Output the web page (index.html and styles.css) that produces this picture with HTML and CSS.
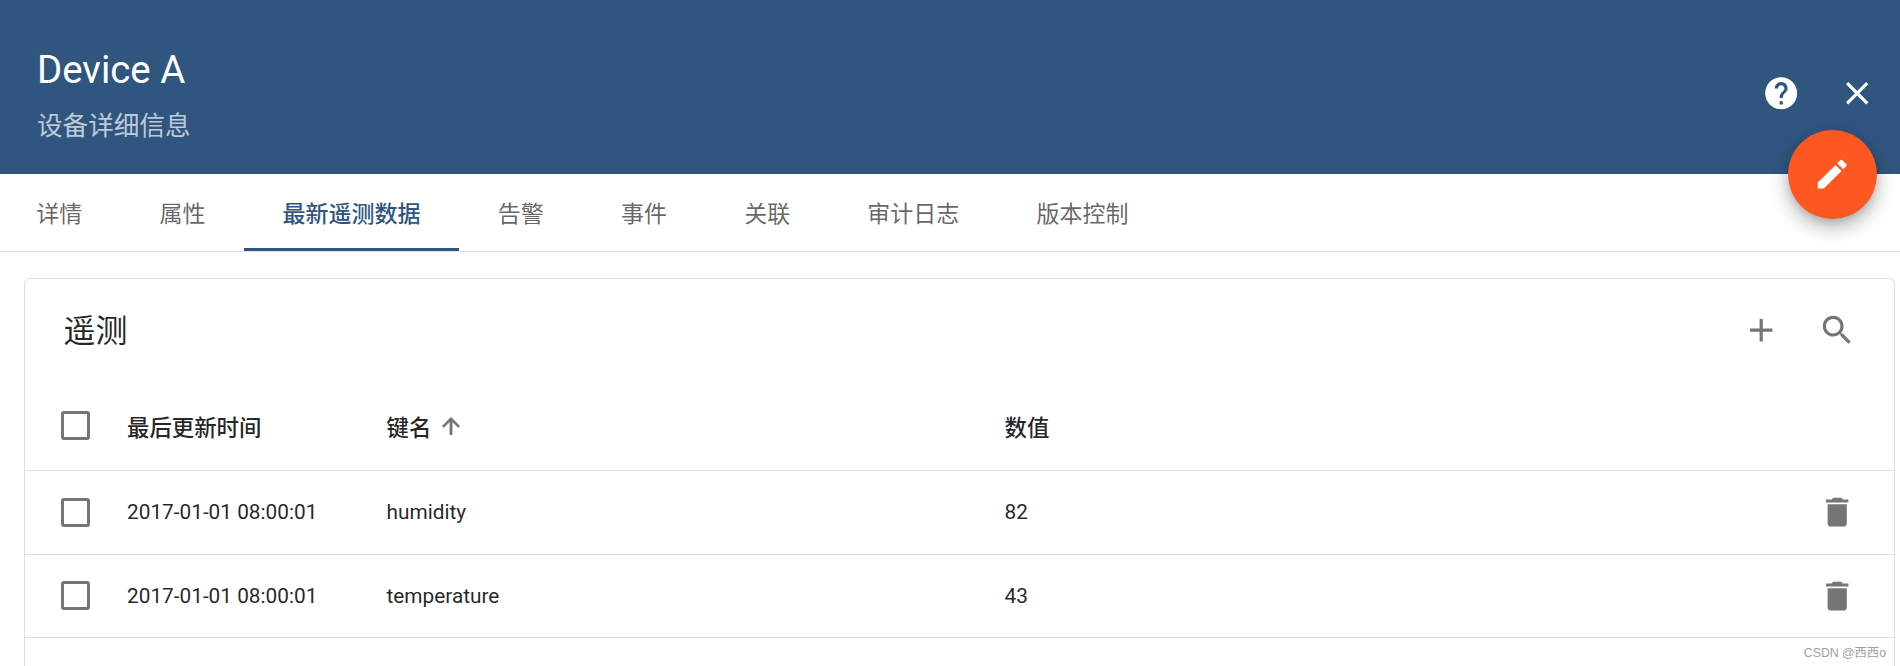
FILE: index.html
```html
<!DOCTYPE html>
<html lang="en">
<head>
    <meta charset="UTF-8">
    <meta name="viewport" content="width=device-width, initial-scale=1.0">
    <title>Device A</title>
    <link rel="stylesheet" href="styles.css">
</head>
<body>
    <header class="details-header">
        <div class="details-title">
            <h1>Device A</h1>
            <p>设备详细信息</p>
        </div>
        <div class="details-actions">
            <button class="icon-btn">
                <svg class="icon-help" viewBox="0 0 24 24"><path d="M12 2C6.48 2 2 6.48 2 12s4.48 10 10 10 10-4.48 10-10S17.52 2 12 2zm1 17h-2v-2h2v2zm2.07-7.75l-.9.92C13.45 12.9 13 13.5 13 15h-2v-.5c0-1.1.45-2.1 1.17-2.83l1.24-1.26c.37-.36.59-.86.59-1.41 0-1.1-.9-2-2-2s-2 .9-2 2H8c0-2.21 1.79-4 4-4s4 1.79 4 4c0 .88-.36 1.68-.93 2.25z"/></svg>
            </button>
            <button class="icon-btn">
                <svg viewBox="0 0 24 24"><path d="M19 6.41L17.59 5 12 10.59 6.41 5 5 6.41 10.59 12 5 17.59 6.41 19 12 13.41 17.59 19 19 17.59 13.41 12z"/></svg>
            </button>
        </div>
    </header>

    <button class="fab">
        <svg viewBox="0 0 24 24"><path d="M3 17.25V21h3.75L17.81 9.94l-3.75-3.75L3 17.25zM20.71 7.04c.39-.39.39-1.02 0-1.41l-2.34-2.34c-.39-.39-1.02-.39-1.41 0l-1.83 1.83 3.75 3.75 1.83-1.83z"/></svg>
    </button>

    <nav class="tabs">
        <a class="tab">详情</a>
        <a class="tab">属性</a>
        <a class="tab active">最新遥测数据</a>
        <a class="tab">告警</a>
        <a class="tab">事件</a>
        <a class="tab">关联</a>
        <a class="tab">审计日志</a>
        <a class="tab">版本控制</a>
    </nav>

    <main class="content">
        <section class="card">
            <div class="card-toolbar">
                <h2>遥测</h2>
                <div class="card-actions">
                    <button class="icon-btn">
                        <svg viewBox="0 0 24 24"><path d="M19 13h-6v6h-2v-6H5v-2h6V5h2v6h6v2z"/></svg>
                    </button>
                    <button class="icon-btn">
                        <svg viewBox="0 0 24 24"><path d="M15.5 14h-.79l-.28-.27C15.41 12.59 16 11.11 16 9.5 16 5.91 13.09 3 9.5 3S3 5.91 3 9.5 5.91 16 9.5 16c1.61 0 3.09-.59 4.23-1.57l.27.28v.79l5 4.99L20.49 19l-4.99-5zm-6 0C7.01 14 5 11.99 5 9.5S7.01 5 9.5 5 14 7.01 14 9.5 11.99 14 9.5 14z"/></svg>
                    </button>
                </div>
            </div>

            <div class="row head">
                <span class="check"></span>
                <span>最后更新时间</span>
                <span class="sorted">键名
                    <svg class="sort-arrow" viewBox="0 0 24 24"><path d="M4 12l1.41 1.41L11 7.83V20h2V7.83l5.58 5.59L20 12l-8-8-8 8z"/></svg>
                </span>
                <span>数值</span>
                <span></span>
            </div>

            <div class="row">
                <span class="check"></span>
                <span>2017-01-01 08:00:01</span>
                <span>humidity</span>
                <span>82</span>
                <button class="icon-btn">
                    <svg viewBox="0 0 24 24"><path d="M6 19c0 1.1.9 2 2 2h8c1.1 0 2-.9 2-2V7H6v12zM19 4h-3.5l-1-1h-5l-1 1H5v2h14V4z"/></svg>
                </button>
            </div>
            <div class="row">
                <span class="check"></span>
                <span>2017-01-01 08:00:01</span>
                <span>temperature</span>
                <span>43</span>
                <button class="icon-btn">
                    <svg viewBox="0 0 24 24"><path d="M6 19c0 1.1.9 2 2 2h8c1.1 0 2-.9 2-2V7H6v12zM19 4h-3.5l-1-1h-5l-1 1H5v2h14V4z"/></svg>
                </button>
            </div>
        </section>
    </main>

    <span class="watermark">CSDN @西西o</span>
</body>
</html>
```

FILE: styles.css
```css
html, body {
    height: 100%;
}
body {
    margin: 0;
    display: flex;
    flex-direction: column;
    overflow: hidden;
    position: relative;
    background: #fff;
    font-family: Roboto, "Noto Sans CJK SC", sans-serif;
    color: rgba(0, 0, 0, 0.87);
}
button {
    border: none;
    background: none;
    padding: 0;
    cursor: pointer;
}

/* blue header */
.details-header {
    height: 174px;
    flex: none;
    display: flex;
    justify-content: space-between;
    background: #305680;
    color: #fff;
    padding: 0 11px 0 37px;
    box-sizing: border-box;
}
.details-title h1 {
    margin: 50px 0 0;
    font-size: 38.4px;
    font-weight: 400;
    line-height: 40px;
}
.details-title p {
    margin: 21px 0 0;
    font-size: 25.6px;
    line-height: 30px;
    color: rgba(255, 255, 255, 0.7);
}
.details-actions {
    display: flex;
    gap: 12px;
    margin-top: 61px;
    height: 64px;
}
.icon-btn {
    width: 64px;
    height: 64px;
    display: flex;
    align-items: center;
    justify-content: center;
    fill: #757575;
}
.icon-btn svg {
    width: 38.4px;
    height: 38.4px;
}
.details-actions .icon-btn {
    fill: #fff;
}

/* edit button sits over the header edge */
.fab {
    position: absolute;
    top: 129.5px;
    left: 1787.5px;
    width: 89px;
    height: 89px;
    border-radius: 50%;
    background: #ff5722;
    fill: #fff;
    display: flex;
    align-items: center;
    justify-content: center;
    box-shadow: 0 5px 8px -3px rgba(0, 0, 0, 0.2), 0 10px 16px 2px rgba(0, 0, 0, 0.14), 0 3px 22px 3px rgba(0, 0, 0, 0.1);
}
.fab svg {
    width: 38.4px;
    height: 38.4px;
}

/* tabs */
.tabs {
    display: flex;
    flex: none;
    height: 78px;
    box-sizing: border-box;
    border-bottom: 1px solid #e0e0e0;
}
.tab {
    display: flex;
    align-items: center;
    padding: 0 38.6px 2px;
    height: 77px;
    box-sizing: border-box;
    font-size: 23px;
    color: rgba(0, 0, 0, 0.62);
}
.tab:first-child {
    margin-left: -2.4px;
}
.tab.active {
    color: #305680;
    font-weight: 500;
    border-bottom: 3px solid #305680;
    padding-top: 1px;
    padding-bottom: 0;
}

/* telemetry card, runs off the bottom of the page */
.content {
    flex: 1;
    min-height: 0;
    padding: 26px 5px 0 24px;
    display: flex;
}
.card {
    flex: 1;
    border: 1px solid #e0e0e0;
    border-bottom: none;
    border-radius: 6px 6px 0 0;
}
.card-toolbar {
    height: 102px;
    display: flex;
    align-items: center;
    justify-content: space-between;
    padding: 0 25px 0 38.4px;
}
.card-toolbar h2 {
    margin: -5px 0 0;
    font-size: 32px;
    font-weight: 400;
}
.card-actions {
    display: flex;
    gap: 12px;
}

.row {
    display: grid;
    grid-template-columns: 102px 259.5px 618px 1fr 64px;
    align-items: center;
    height: 83.4px;
    box-sizing: border-box;
    border-bottom: 1px solid #e0e0e0;
    font-size: 20.8px;
    padding-right: 25px;
}
.row.head {
    height: 90.2px;
    font-size: 22.4px;
    font-weight: 500;
}
.check {
    width: 29px;
    height: 29px;
    box-sizing: border-box;
    border: 3.2px solid #757575;
    border-radius: 3px;
    margin-left: 36px;
}
.sorted {
    display: flex;
    align-items: center;
    gap: 7px;
}
.sort-arrow {
    width: 26px;
    height: 26px;
    fill: #757575;
    stroke: #757575;
    stroke-width: 0.6;
}

.watermark {
    position: absolute;
    right: 14px;
    top: 643px;
    font-family: "Liberation Sans", "Noto Sans CJK SC", sans-serif;
    font-size: 12.3px;
    color: #a0a0a0;
}
```
